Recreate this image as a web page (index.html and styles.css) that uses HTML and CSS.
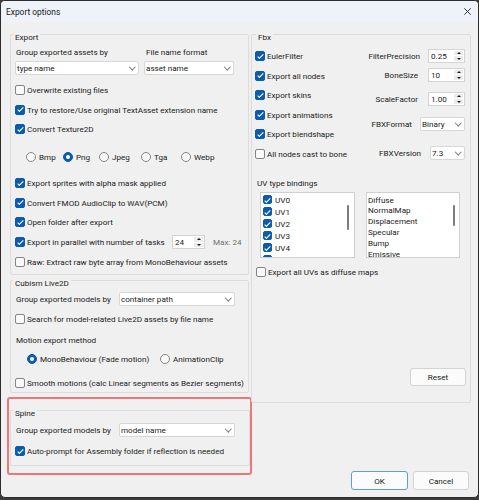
FILE: index.html
```html
<!DOCTYPE html>
<html lang="en">
<head>
<meta charset="utf-8">
<title>Export options</title>
<link rel="stylesheet" href="styles.css">
</head>
<body>
<div class="window">
  <div class="titlebar">
    <span class="title">Export options</span>
    <svg class="close" width="7" height="7" viewBox="0 0 7 7"><path d="M0.3 0.3 6.7 6.7M6.7 0.3 0.3 6.7" stroke="#1f1f1f" stroke-width="0.9" fill="none"/></svg>
  </div>

  <div class="client">
    <!-- left column: Export, Cubism Live2D, Spine -->
    <div class="col col-left">
      <section class="group g-export">
        <div class="legend">Export</div>
        <div class="pair pair-labels">
          <span>Group exported assets by</span>
          <span class="lbl-fmt">File name format</span>
        </div>
        <div class="pair pair-combos">
          <div class="combo">type name</div>
          <div class="combo">asset name</div>
        </div>
        <div class="check"><span class="cb"></span><span>Overwrite existing files</span></div>
        <div class="check"><span class="cb on"></span><span>Try to restore/Use original TextAsset extension name</span></div>
        <div class="check"><span class="cb on"></span><span>Convert Texture2D</span></div>
        <div class="radios tex">
          <span class="opt"><span class="rb"></span>Bmp</span>
          <span class="opt"><span class="rb on"></span>Png</span>
          <span class="opt"><span class="rb"></span>Jpeg</span>
          <span class="opt"><span class="rb"></span>Tga</span>
          <span class="opt"><span class="rb"></span>Webp</span>
        </div>
        <div class="check"><span class="cb on"></span><span>Export sprites with alpha mask applied</span></div>
        <div class="check"><span class="cb on"></span><span>Convert FMOD AudioClip to WAV(PCM)</span></div>
        <div class="check"><span class="cb on"></span><span>Open folder after export</span></div>
        <div class="check parallel">
          <span class="cb on"></span>
          <span class="lbl-par">Export in parallel with number of tasks</span>
          <div class="spin w-tasks"><span>24</span><span class="arrows"><span class="up"></span><span class="dn"></span></span></div>
          <span class="muted">Max: 24</span>
        </div>
        <div class="check"><span class="cb"></span><span>Raw: Extract raw byte array from MonoBehaviour assets</span></div>
      </section>

      <section class="group g-cubism">
        <div class="legend">Cubism Live2D</div>
        <div class="model-row">
          <span>Group exported models by</span>
          <div class="combo">container path</div>
        </div>
        <div class="check c-search"><span class="cb"></span><span>Search for model-related Live2D assets by file name</span></div>
        <div class="plain motion-lbl">Motion export method</div>
        <div class="radios motion">
          <span class="opt"><span class="rb on"></span>MonoBehaviour (Fade motion)</span>
          <span class="opt"><span class="rb"></span>AnimationClip</span>
        </div>
        <div class="check c-smooth"><span class="cb"></span><span>Smooth motions (calc Linear segments as Bezier segments)</span></div>
      </section>

      <div class="highlight">
        <section class="group g-spine">
          <div class="legend">Spine</div>
          <div class="model-row">
            <span>Group exported models by</span>
            <div class="combo">model name</div>
          </div>
          <div class="check c-auto"><span class="cb on"></span><span>Auto-prompt for Assembly folder if reflection is needed</span></div>
        </section>
      </div>
    </div>

    <!-- right column: Fbx and dialog buttons -->
    <div class="col col-right">
      <section class="group g-fbx">
        <div class="legend">Fbx</div>
        <div class="fbx-top">
          <div class="fbx-checks">
            <div class="check"><span class="cb on"></span><span>EulerFilter</span></div>
            <div class="check"><span class="cb on"></span><span>Export all nodes</span></div>
            <div class="check"><span class="cb on"></span><span>Export skins</span></div>
            <div class="check"><span class="cb on"></span><span>Export animations</span></div>
            <div class="check"><span class="cb on"></span><span>Export blendshape</span></div>
            <div class="check"><span class="cb"></span><span>All nodes cast to bone</span></div>
          </div>
          <div class="fields">
            <div class="field f-prec"><span>FilterPrecision</span><div class="spin w-num"><span>0.25</span><span class="arrows"><span class="up"></span><span class="dn"></span></span></div></div>
            <div class="field f-bone"><span>BoneSize</span><div class="spin w-num"><span>10</span><span class="arrows"><span class="up"></span><span class="dn"></span></span></div></div>
            <div class="field f-scale"><span>ScaleFactor</span><div class="spin w-num"><span>1.00</span><span class="arrows"><span class="up"></span><span class="dn"></span></span></div></div>
            <div class="field f-format"><span>FBXFormat</span><div class="combo w-format">Binary</div></div>
            <div class="field f-version"><span>FBXVersion</span><div class="combo w-version">7.3</div></div>
          </div>
        </div>

        <div class="plain uv-lbl">UV type bindings</div>
        <div class="lists">
          <div class="list">
            <div class="uv-item"><span class="cb sm on"></span>UV0</div>
            <div class="uv-item"><span class="cb sm on"></span>UV1</div>
            <div class="uv-item"><span class="cb sm on"></span>UV2</div>
            <div class="uv-item"><span class="cb sm on"></span>UV3</div>
            <div class="uv-item"><span class="cb sm on"></span>UV4</div>
            <div class="uv-item"><span class="cb sm on"></span></div>
            <span class="thumb t-uv"></span>
          </div>
          <div class="list">
            <div class="map-item">Diffuse</div>
            <div class="map-item">NormalMap</div>
            <div class="map-item">Displacement</div>
            <div class="map-item">Specular</div>
            <div class="map-item">Bump</div>
            <div class="map-item">Emissive</div>
            <span class="thumb t-map"></span>
          </div>
        </div>
        <div class="check c-alluv"><span class="cb"></span><span>Export all UVs as diffuse maps</span></div>

        <div class="reset-row"><button class="btn b-reset">Reset</button></div>
      </section>

      <div class="dialog-buttons">
        <button class="btn b-ok">OK</button>
        <button class="btn b-cancel">Cancel</button>
      </div>
    </div>
  </div>
</div>
</body>
</html>
```

FILE: styles.css
```css
* { box-sizing: border-box; }

html, body { margin: 0; padding: 0; }

body {
  width: 479px;
  height: 500px;
  overflow: hidden;
  background: #3b3b3b;
  font-family: Roboto, "Noto Sans", sans-serif;
  font-size: 8.1px;
  color: #1a1a1a;
}

/* ---------- window frame ---------- */
.window {
  width: 479px;
  height: 498px;
  border: 1px solid #2c2c2c;
  border-radius: 5px;
  background: #f0f0f0;
  display: flex;
  flex-direction: column;
  overflow: hidden;
}

.titlebar {
  flex: none;
  height: 21px;
  background: #eef3f9;
  display: flex;
  align-items: center;
  padding: 0 7px 0 5px;
}

.title { font-size: 8.4px; }
.close { margin-left: auto; }

.client {
  flex: 1;
  display: grid;
  grid-template-columns: 239px 220px;
  column-gap: 2px;
  padding: 12px 7px 7px 9px;
}

.col { display: flex; flex-direction: column; min-height: 0; }

/* ---------- group boxes ---------- */
.group {
  border: 1px solid #dcdcdc;
  border-radius: 2px;
  display: flex;
  flex-direction: column;
  padding: 0 5px 0 4px;
}

.legend {
  align-self: flex-start;
  height: 12px;
  line-height: 12px;
  margin: -4px 0 0 -2px;
  padding: 0 2px;
  background: #f0f0f0;
}

.g-export { height: 241px; }
.g-cubism { height: 113px; margin-top: 5px; }
.g-spine { height: 56px; }

.highlight {
  margin: 4px -3px 0 -3px;
  border: 2px solid #ee7676;
  border-radius: 3px;
  padding: 11px 0 7px 1px;
}

/* ---------- rows ---------- */
.pair {
  display: grid;
  grid-template-columns: 124px 90px;
  column-gap: 5px;
}
.pair-labels { height: 12px; line-height: 12px; margin-top: 3px; padding-left: 1px; }
.lbl-fmt { padding-left: 1px; }
.pair-combos { margin-top: 3px; }
.pair-combos + .check { margin-top: 5.25px; }

.check {
  display: flex;
  align-items: center;
  gap: 2px;
  height: 19.5px;
  white-space: nowrap;
}

.plain { height: 12px; line-height: 12px; padding-left: 1px; }

.parallel { height: 20.5px; }
.lbl-par { width: 141px; }
.parallel .spin { margin-left: 2px; }
.muted { color: #6f6f6f; margin-left: 6px; }

.radios { display: grid; align-items: center; }
.radios.tex {
  grid-template-columns: 37px 36px 42px 40px auto;
  height: 34.5px;
  padding: 2px 0 0 11px;
}
.radios.motion {
  grid-template-columns: 133px auto;
  height: 19.5px;
  margin-top: 4.25px;
  padding-left: 12px;
}
.opt { display: flex; align-items: center; gap: 3px; white-space: nowrap; }

.model-row {
  display: grid;
  grid-template-columns: 103px 116px;
  align-items: center;
  margin-top: 3px;
  padding-left: 1px;
}
.g-spine .model-row { margin-top: 4px; }
.c-search { margin-top: 4.25px; }
.motion-lbl { margin-top: 5.25px; }
.c-smooth { margin-top: 5px; }
.c-auto { margin-top: 4.25px; }

/* ---------- controls ---------- */
.cb {
  flex: none;
  width: 10px;
  height: 10px;
  border: 1px solid #858585;
  border-radius: 2px;
  background: #f9f9f9;
  position: relative;
}
.cb.on { background: #0b5cad; border-color: #0b5cad; }
.cb.on::after {
  content: "";
  position: absolute;
  left: 2.7px;
  top: 0.7px;
  width: 2.4px;
  height: 4.8px;
  border: solid #fff;
  border-width: 0 1px 1px 0;
  transform: rotate(45deg);
}
.cb.sm { width: 9px; height: 9px; }
.cb.sm.on::after { left: 2.4px; top: 0.4px; }

.rb {
  flex: none;
  width: 10px;
  height: 10px;
  border-radius: 50%;
  border: 1px solid #858585;
  background: #f9f9f9;
  display: flex;
  align-items: center;
  justify-content: center;
}
.rb.on { border-color: #0b5cad; background: #0b5cad; }
.rb.on::after { content: ""; width: 4px; height: 4px; border-radius: 50%; background: #fff; }

.combo {
  height: 14px;
  background: #fff;
  border: 1px solid #d7d7d7;
  border-radius: 2px;
  display: flex;
  align-items: center;
  padding: 0 4px 0 1px;
  white-space: nowrap;
}
.combo::after {
  content: "";
  margin-left: auto;
  width: 3.5px;
  height: 3.5px;
  border: solid #7a7a7a;
  border-width: 0 1px 1px 0;
  transform: translateY(-1.5px) rotate(45deg);
}

.spin {
  height: 14px;
  background: #fff;
  border: 1px solid #d4d4d4;
  display: flex;
  align-items: center;
  padding-left: 2px;
}
.arrows {
  margin-left: auto;
  align-self: stretch;
  width: 10px;
  display: flex;
  flex-direction: column;
  gap: 1px;
  padding: 1px 1px 1px 0;
}
.up, .dn {
  flex: 1;
  background: #ececec;
  display: flex;
  align-items: center;
  justify-content: center;
}
.up::after, .dn::after {
  content: "";
  border-left: 2px solid transparent;
  border-right: 2px solid transparent;
}
.up::after { border-bottom: 2.5px solid #1f1f1f; }
.dn::after { border-top: 2.5px solid #1f1f1f; }

.w-tasks { width: 33px; }
.w-num { width: 37px; }
.w-format { width: 45px; }
.w-version { width: 35px; }

/* ---------- fbx ---------- */
.g-fbx {
  flex: none;
  height: 369px;
  padding: 0 5px 16px 3px;
}
.g-fbx .legend { margin-left: 1px; }

.fbx-top {
  display: grid;
  grid-template-columns: 1fr auto;
  margin-top: 3.3px;
}

.fields { display: flex; flex-direction: column; align-items: flex-end; }
.field { display: flex; align-items: center; gap: 8px; height: 14px; }
.f-prec { margin-top: 2.7px; }
.f-bone { margin-top: 5px; }
.f-bone > span, .f-scale > span { margin-right: 2px; }
.f-scale { margin-top: 10px; }
.f-format { margin-top: 11px; }
.f-version { margin-top: 15px; }
.f-version > span { margin-right: 1px; }

.uv-lbl { margin-top: 13.7px; padding-left: 2px; }

.lists {
  display: grid;
  grid-template-columns: 95px 94px;
  column-gap: 11px;
  margin: 3px 0 0 5px;
}
.list {
  height: 66px;
  background: #fff;
  border: 1px solid #d0d0d0;
  position: relative;
  overflow: hidden;
}
.uv-item {
  height: 12px;
  display: flex;
  align-items: center;
  gap: 3px;
  padding-left: 2px;
}
.uv-item:first-child { margin-top: 1px; }
.map-item { height: 10.8px; line-height: 10.8px; padding-left: 1px; }
.map-item:first-child { margin-top: 1.6px; }

.thumb {
  position: absolute;
  left: 86px;
  top: 12px;
  width: 2px;
  border-radius: 1px;
  background: #7d7d7d;
}
.t-uv { height: 25px; }
.t-map { height: 21px; }

.c-alluv { margin-top: 4.25px; padding-left: 1px; }

.reset-row {
  margin-top: auto;
  display: flex;
  justify-content: flex-end;
  margin-right: -1px;
}

/* ---------- buttons ---------- */
.btn {
  font: inherit;
  color: #1a1a1a;
  height: 19px;
  padding: 0;
  border: 1px solid #d3d3d3;
  border-radius: 3px;
  background: #fbfbfb;
}
.b-reset { width: 56px; height: 18px; }
.b-ok { width: 57px; border-color: #5a9fdc; }
.b-cancel { width: 56px; }

.dialog-buttons {
  margin-top: auto;
  display: flex;
  justify-content: flex-end;
  gap: 5px;
  padding-right: 2px;
}
```
